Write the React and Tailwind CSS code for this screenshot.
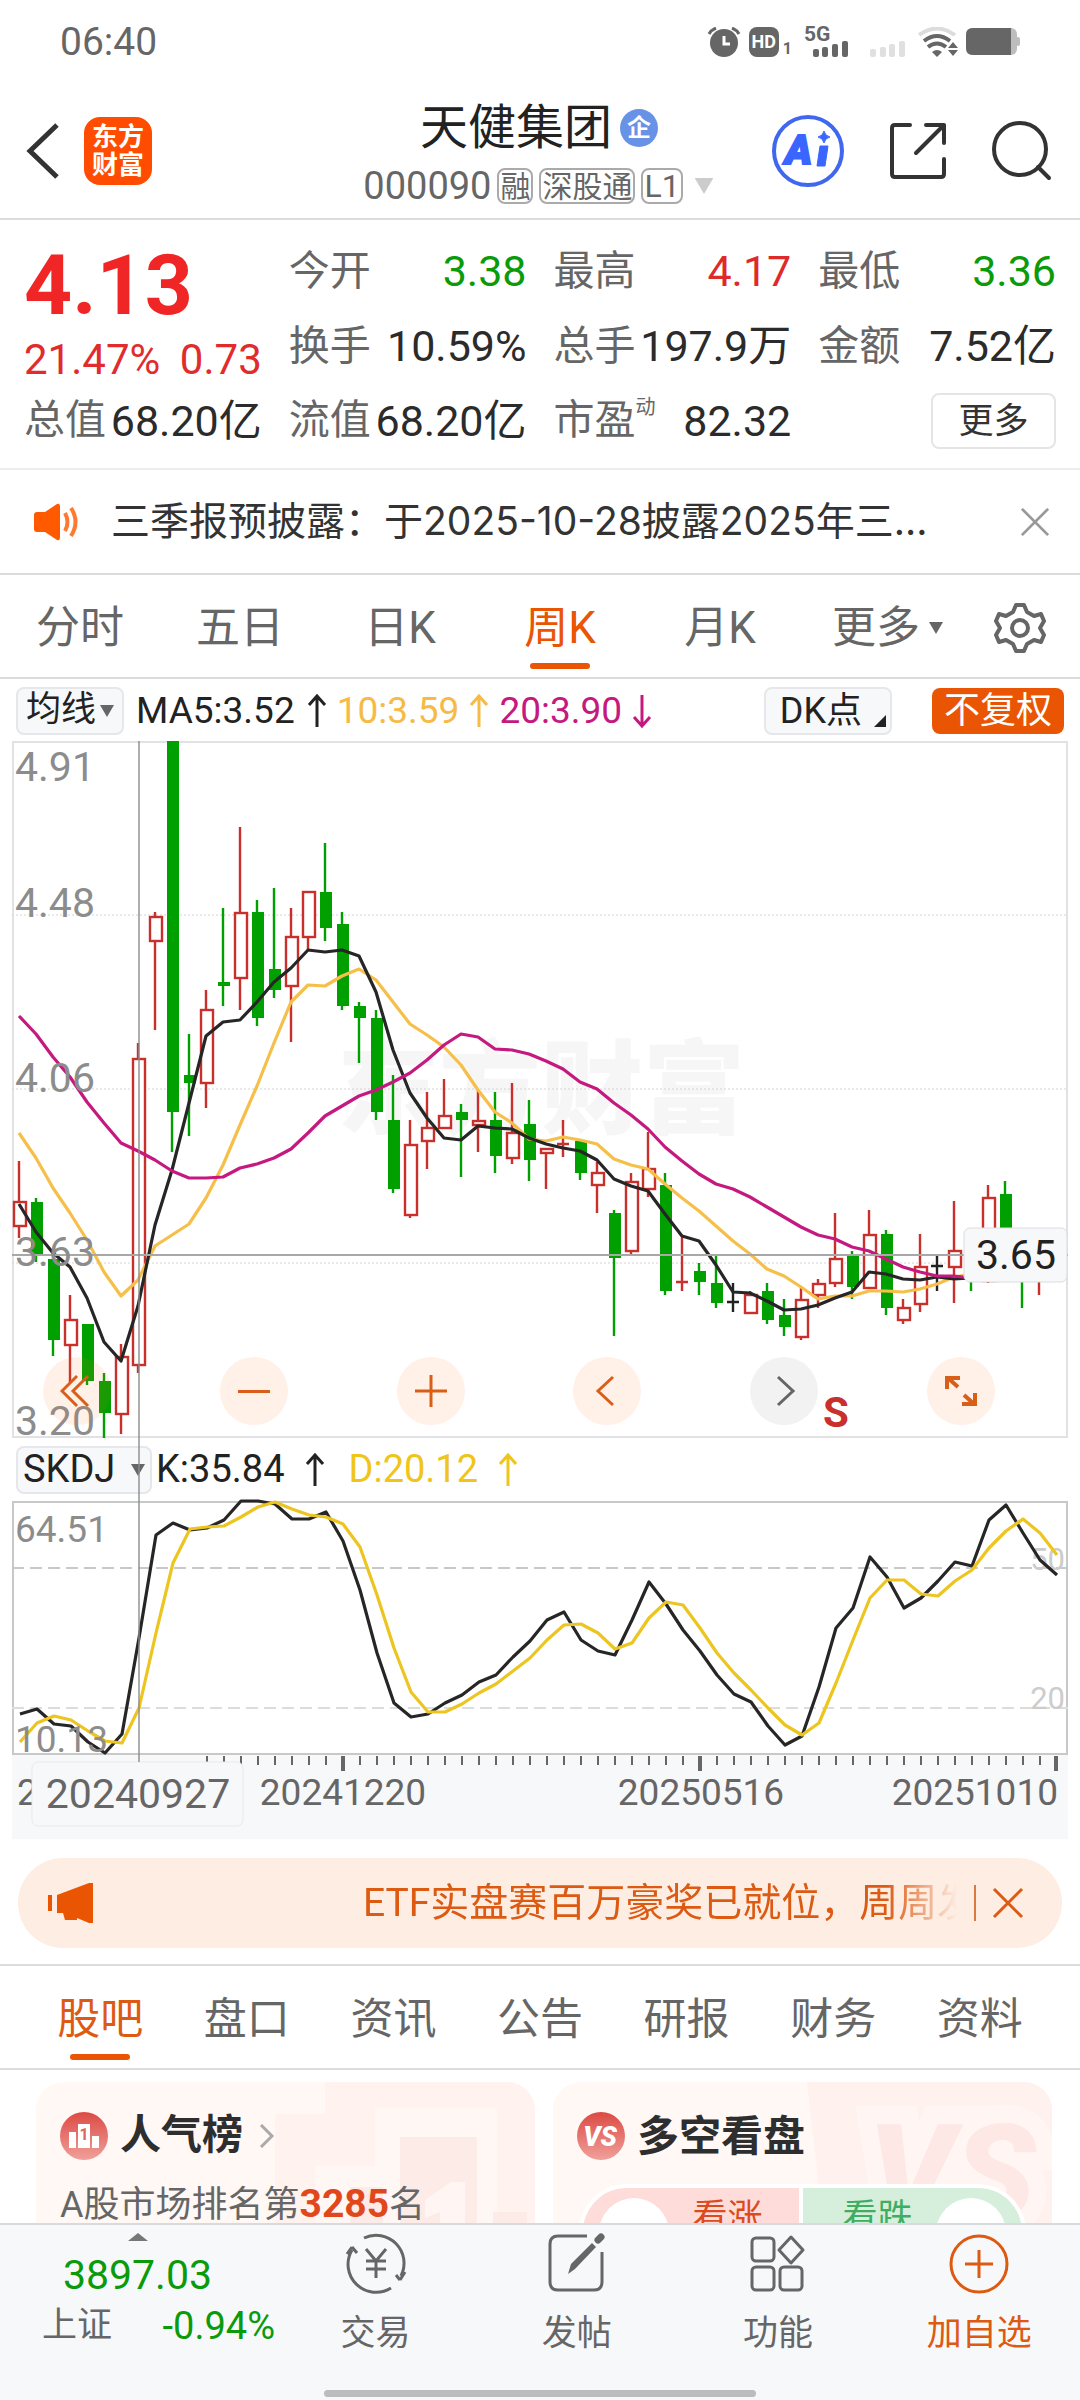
import React from "react";

// [kind, high, body top, body bottom, low] in chart units, r = up, g = down, k = flat
const candles = [
  ["r", 420, 460, 485, 497], ["g", 457, 461, 513, 521], ["g", 518, 518, 599, 615], ["r", 554, 578, 604, 642],
  ["g", 583, 583, 640, 644], ["g", 632, 640, 672, 697], ["r", 603, 615, 673, 693], ["r", 302, 317, 624, 632],
  ["r", 171, 175, 200, 289], ["g", 0, 0, 371, 411], ["g", 293, 334, 342, 395], ["r", 249, 268, 342, 367],
  ["g", 167, 241, 245, 265], ["r", 86, 171, 237, 269], ["g", 159, 171, 277, 285], ["g", 147, 228, 249, 257],
  ["r", 167, 195, 245, 301], ["r", 150, 150, 196, 208], ["g", 102, 151, 187, 200], ["g", 171, 183, 265, 269],
  ["g", 261, 265, 277, 322], ["g", 269, 277, 371, 379], ["g", 334, 379, 448, 452], ["r", 379, 403, 474, 477],
  ["r", 351, 386, 400, 428], ["r", 338, 374, 387, 387], ["g", 363, 371, 379, 436], ["r", 349, 379, 384, 411],
  ["g", 351, 379, 415, 432], ["r", 342, 391, 417, 423], ["g", 359, 383, 419, 440], ["r", 407, 407, 412, 448],
  ["r", 379, 403, 404, 416], ["g", 399, 400, 432, 439], ["r", 421, 431, 444, 472], ["g", 469, 472, 517, 595],
  ["r", 432, 440, 510, 513], ["r", 391, 427, 448, 456], ["g", 432, 444, 550, 554], ["r", 496, 541, 542, 550],
  ["g", 522, 530, 541, 554], ["g", 514, 542, 562, 567], ["k", 542, 561, 562, 571], ["r", 550, 553, 572, 572],
  ["g", 542, 550, 579, 583], ["g", 558, 574, 586, 595], ["r", 547, 558, 596, 599], ["r", 538, 542, 554, 567],
  ["r", 472, 517, 542, 546], ["g", 510, 514, 546, 558], ["r", 469, 493, 547, 547], ["g", 489, 493, 567, 574],
  ["r", 558, 566, 579, 583], ["r", 493, 525, 563, 571], ["k", 514, 525, 526, 550], ["r", 460, 509, 526, 562],
  ["g", 500, 505, 536, 550], ["r", 444, 456, 540, 542], ["g", 440, 453, 520, 530], ["g", 500, 505, 536, 567],
  ["r", 495, 500, 530, 554],
];

const ma5 = [463, 491, 512, 526, 557, 601, 620, 565, 484, 429, 362, 295, 281, 279, 261, 241, 227, 209, 211, 209, 215, 251, 309, 352, 377, 397, 399, 385, 387, 388, 397, 403, 407, 410, 419, 438, 445, 450, 473, 495, 500, 524, 551, 552, 560, 569, 568, 564, 557, 551, 531, 533, 538, 539, 536, 538, 537];
const ma10 = [392, 417, 447, 472, 499, 531, 555, 539, 505, 494, 483, 457, 424, 384, 345, 302, 261, 244, 245, 235, 228, 239, 261, 283, 294, 306, 324, 349, 371, 382, 398, 400, 396, 399, 403, 418, 424, 428, 443, 457, 470, 485, 500, 513, 528, 535, 546, 558, 555, 555, 550, 550, 551, 548, 543, 536, 533];
const ma20 = [275, 293, 316, 336, 361, 382, 402, 410, 419, 430, 437, 437, 436, 427, 423, 417, 408, 392, 375, 365, 355, 349, 341, 332, 319, 304, 293, 296, 308, 309, 313, 320, 328, 341, 348, 362, 374, 388, 406, 420, 433, 443, 448, 456, 466, 476, 486, 494, 498, 506, 510, 518, 526, 531, 535, 535, 537];

const lineK = [213, 208, 223, 225, 241, 252, 233, 137, 34, 22, 29, 27, 19, 0, 0, 3, 18, 18, 11, 40, 89, 152, 202, 216, 213, 202, 194, 181, 174, 156, 140, 119, 111, 139, 150, 154, 119, 81, 103, 129, 150, 174, 193, 201, 225, 244, 235, 186, 127, 107, 56, 76, 107, 97, 80, 61, 65, 19, 4, 32, 59, 74];
const lineD = [241, 222, 215, 219, 230, 240, 242, 207, 132, 62, 28, 26, 25, 16, 6, 1, 8, 14, 16, 23, 46, 94, 147, 191, 211, 211, 203, 192, 183, 170, 157, 139, 124, 123, 132, 148, 142, 117, 101, 104, 127, 152, 172, 189, 207, 224, 234, 222, 182, 139, 97, 79, 79, 93, 95, 80, 69, 47, 30, 18, 32, 54];

const colors = { r: "#c9302c", g: "#00a000", k: "#222222" };

const toPoints = (values, start) => values.map((y, i) => `${start + i * 17},${y}`).join(" ");

const quotes = [
  { label: "今开", value: "3.38", color: "text-[#0a9a0a]" },
  { label: "最高", value: "4.17", color: "text-[#dd2a2a]" },
  { label: "最低", value: "3.36", color: "text-[#0a9a0a]" },
  { label: "换手", value: "10.59%", color: "text-[#2b2b2b]" },
  { label: "总手", value: "197.9万", color: "text-[#2b2b2b]" },
  { label: "金额", value: "7.52亿", color: "text-[#2b2b2b]" },
];

const periods = ["分时", "五日", "日K", "周K", "月K"];
const sections = ["股吧", "盘口", "资讯", "公告", "研报", "财务", "资料"];

const Arrow = ({ down, className }) => (
  <svg viewBox="0 0 20 34" className={`w-5 h-[34px] ${className}`} fill="none" stroke="currentColor" strokeWidth="3">
    <path d={down ? "M10 1V32M2 23L10 32L18 23" : "M10 33V2M2 11L10 2L18 11"} />
  </svg>
);

const Caret = ({ className }) => (
  <svg viewBox="0 0 14 12" className={className} fill="currentColor">
    <path d="M0 0H14L7 12Z" />
  </svg>
);

const Close = ({ className }) => (
  <svg viewBox="0 0 32 32" className={className} fill="none" stroke="currentColor" strokeWidth="3">
    <path d="M2 2L30 30M30 2L2 30" />
  </svg>
);

const StatusBar = () => (
  <div className="flex h-[84px] shrink-0 items-center justify-between pl-[60px] pr-[60px] text-[#666]">
    <span className="text-[39px] leading-[48px]">06:40</span>
    <div className="flex items-center gap-2">
      <svg viewBox="0 0 34 30" className="h-[30px] w-[34px]">
        <circle cx="17" cy="16" r="14" fill="#666" />
        <path d="M2 7Q4 3 9 1M32 7Q30 3 25 1" stroke="#666" strokeWidth="3" fill="none" />
        <path d="M17 9V17H23" stroke="#fff" strokeWidth="3" fill="none" />
      </svg>
      <div className="flex items-end gap-1">
        <span className="flex h-[30px] w-[30px] items-center justify-center rounded-lg bg-[#666] text-lg font-bold text-white">HD</span>
        <span className="text-base leading-4 font-bold">1</span>
      </div>
      <svg viewBox="0 0 46 32" className="ml-1 h-8 w-[46px] overflow-visible" fill="#666">
        <text x="0" y="15" fontSize="21" fontWeight="700">5G</text>
        <rect x="9" y="23" width="6" height="8" rx="2" />
        <rect x="18" y="21" width="6" height="10" rx="2" />
        <rect x="28" y="18" width="6" height="13" rx="2" />
        <rect x="38" y="15" width="6" height="16" rx="2" />
      </svg>
      <svg viewBox="0 0 36 32" className="mr-1 ml-3 h-8 w-9" fill="#e0e0e0">
        <rect x="0" y="23" width="6" height="8" rx="2" />
        <rect x="10" y="21" width="6" height="10" rx="2" />
        <rect x="19" y="18" width="6" height="13" rx="2" />
        <rect x="29" y="15" width="6" height="16" rx="2" />
      </svg>
      <svg viewBox="0 0 40 30" className="h-[30px] w-10" fill="none" strokeWidth="4">
        <path d="M1 8Q19 -5 37 8" stroke="#dcdcdc" />
        <path d="M6 14Q19 4 32 14" stroke="#666" />
        <path d="M10 20Q19 13 28 20" stroke="#666" />
        <path d="M14 25Q19 21 24 25L19 30Z" fill="#666" />
        <path d="M30 21L35 15L40 21ZM30 23L35 29L40 23Z" fill="#666" />
      </svg>
      <svg viewBox="0 0 54 28" className="h-7 w-[54px]">
        <rect x="0" y="0" width="51" height="27" rx="6" fill="#bdbdbd" />
        <rect x="50" y="9" width="4" height="9" rx="2" fill="#bdbdbd" />
        <path d="M7 0H45V27H7Q0 27 0 20V7Q0 0 7 0Z" fill="#666" />
      </svg>
    </div>
  </div>
);

const Header = () => (
  <header className="flex h-[136px] shrink-0 items-center border-b-2 border-[#dcdcdc] pl-[26px] pr-7">
    <div className="flex flex-1 items-center gap-6">
      <button aria-label="返回">
        <svg viewBox="0 0 34 56" className="h-14 w-[34px]" fill="none" stroke="#333" strokeWidth="5">
          <path d="M31 2L4 28L31 54" />
        </svg>
      </button>
      <div className="flex h-[68px] w-[68px] flex-col items-center justify-center rounded-2xl bg-[#ff4c00] text-[26px] leading-7 font-bold text-white">
        <span>东方</span>
        <span>财富</span>
      </div>
    </div>
    <div className="flex flex-col items-center pt-[10px]">
      <h1 className="flex items-center gap-2 text-[48px] leading-[60px] text-[#222]">
        天健集团
        <span className="flex h-[38px] w-[38px] items-center justify-center rounded-full bg-[#6792e6] text-2xl font-bold text-white">企</span>
      </h1>
      <div className="flex h-14 items-center gap-[6px] text-[#666]">
        <span className="text-[38px]">000090</span>
        <span className="flex h-9 items-center rounded-lg border-2 border-[#aaa] px-px text-[30px]">融</span>
        <span className="flex h-9 items-center rounded-lg border-2 border-[#aaa] px-px text-[30px]">深股通</span>
        <span className="flex h-9 items-center rounded-lg border-2 border-[#aaa] px-px text-[32px]">L1</span>
        <Caret className="ml-1 h-4 w-[22px] text-[#ccc]" />
      </div>
    </div>
    <div className="flex flex-1 items-center justify-end gap-[45px]">
      <button aria-label="Ai">
        <svg viewBox="0 0 72 72" className="h-[72px] w-[72px]">
          <circle cx="36" cy="36" r="34" fill="none" stroke="#3f68ee" strokeWidth="4" />
          <text x="13" y="49" fontSize="41" fontWeight="900" fontStyle="italic" fill="#3a66ff" stroke="#3a66ff" strokeWidth="2">A</text>
          <path d="M48 31H56L53 51H45Z" fill="#3a66ff" stroke="#3a66ff" strokeWidth="1" strokeLinejoin="round" />
          <path d="M52 16Q53 21 58 22Q53 23 52 28Q51 23 46 22Q51 21 52 16Z" fill="#3a66ff" stroke="#3a66ff" />
        </svg>
      </button>
      <button aria-label="分享">
        <svg viewBox="0 0 58 58" className="h-[58px] w-[58px]" fill="none" stroke="#333" strokeWidth="4" strokeLinecap="round" strokeLinejoin="round">
          <path d="M21 3H6Q3 3 3 6V52Q3 55 6 55H52Q55 55 55 52V37M37 3H55V21M55 3L27 31" />
        </svg>
      </button>
      <button aria-label="搜索">
        <svg viewBox="0 0 60 60" className="h-[60px] w-[60px]" fill="none" stroke="#333" strokeWidth="4" strokeLinecap="round">
          <circle cx="28" cy="28" r="26" />
          <path d="M46 46L57 57" />
        </svg>
      </button>
    </div>
  </header>
);

const Pair = ({ label, value, color }) => (
  <div className="flex items-center justify-between whitespace-nowrap">
    <span className="text-[41px] text-[#666]">{label}</span>
    <span className={`text-[43px] ${color}`}>{value}</span>
  </div>
);

const Quote = () => (
  <section className="shrink-0 border-b-2 border-[#ececec] px-6 pt-[14px] pb-[10px]">
    <div className="grid grid-cols-4 gap-x-[27px]">
      <div className="row-span-2 flex flex-col text-[#e02c2c]">
        <strong className="h-[84px] text-[84px] leading-[104px] text-[#f02525]">4.13</strong>
        <div className="flex h-[66px] items-center justify-between pt-4 text-[42px]">
          <span>21.47%</span>
          <span>0.73</span>
        </div>
      </div>
      {quotes.map((q) => (
        <div key={q.label} className="flex h-[75px] flex-col justify-center">
          <Pair {...q} />
        </div>
      ))}
    </div>
    <div className="grid h-[74px] grid-cols-4 items-center gap-x-[27px]">
      <Pair label="总值" value="68.20亿" color="text-[#2b2b2b]" />
      <Pair label="流值" value="68.20亿" color="text-[#2b2b2b]" />
      <Pair
        label={<>市盈<sup className="-top-5 text-xl">动</sup></>}
        value="82.32"
        color="text-[#2b2b2b]"
      />
      <button className="h-14 w-[125px] justify-self-end rounded-lg border-2 border-[#e5e5e5] text-[35px] leading-none text-[#333]">更多</button>
    </div>
  </section>
);

const Notice = () => (
  <div className="flex h-[105px] shrink-0 items-center border-b-2 border-[#dcdcdc] pl-[33px] pr-[30px]">
    <svg viewBox="0 0 46 38" className="h-[38px] w-[46px]">
      <path d="M4 9H12L24 1Q27 0 27 4V34Q27 38 24 37L12 29H4Q1 29 1 26V12Q1 9 4 9Z" fill="#ff5a00" />
      <path d="M32 10Q37 19 32 28M38 5Q47 19 38 33" fill="none" stroke="#ff7a30" strokeWidth="4" />
    </svg>
    <p className="ml-8 flex-1 font-[Inter,'Noto_Sans_CJK_SC',sans-serif] text-[39px] whitespace-nowrap text-[#333]">三季报预披露：于2025-10-28披露2025年三...</p>
    <button aria-label="关闭">
      <Close className="h-[30px] w-[30px] text-[#999]" />
    </button>
  </div>
);

const Periods = () => (
  <nav className="flex h-[104px] shrink-0 border-b-2 border-[#dcdcdc] pt-1 text-[44px] text-[#666]">
    {periods.map((p) => (
      <button key={p} className={`relative flex-4 ${p === "周K" ? "text-[#ea5504]" : ""}`}>
        {p}
        {p === "周K" && <span className="absolute bottom-2 left-1/2 h-[6px] w-[60px] -translate-x-1/2 rounded-full bg-[#ea5504]" />}
      </button>
    ))}
    <button className="flex flex-4 items-center justify-center">
      <span className="ml-4">更多</span>
      <Caret className="ml-2 h-3 w-4" />
    </button>
    <button aria-label="设置" className="flex flex-3 items-center justify-center">
      <svg viewBox="0 0 52 52" className="h-[52px] w-[52px]" fill="none" stroke="#666" strokeWidth="4" strokeLinejoin="round">
        <path d="M22 3H30L33 10L40 14L47 12L50 19L46 26L50 33L47 40L40 38L33 42L30 49H22L19 42L12 38L5 40L2 33L6 26L2 19L5 12L12 14L19 10Z" />
        <circle cx="26" cy="26" r="8" />
      </svg>
    </button>
  </nav>
);

const chip = "flex items-center rounded-lg border-2 border-[#e6e7ea] bg-[#f7f8fa] text-[#222] whitespace-nowrap";
const round = "flex h-[68px] w-[68px] items-center justify-center rounded-full";

const PriceChart = () => (
  <div className="relative">
    <svg viewBox="0 0 1056 696" className="block w-full overflow-visible">
      <text x="529" y="385" textAnchor="middle" fontSize="102" fontWeight="900" fill="#f6f6f7">东方财富</text>
      <rect x="1" y="1" width="1054" height="695" fill="none" stroke="#e2e2e4" strokeWidth="2" />
      {[174, 348, 522].map((y) => (
        <path key={y} d={`M0 ${y}H1056`} stroke="#d4d4d4" strokeDasharray="2 2" />
      ))}
      {candles.map(([kind, high, top, bottom, low], i) => {
        const x = 7 + i * 17;
        const c = colors[kind];
        const flat = bottom - top <= 1;
        return (
          <g key={i} stroke={c} strokeWidth="2.4">
            <path d={flat ? `M${x} ${high}V${low}M${x - 6} ${top}H${x + 6}` : `M${x} ${high}V${top}M${x} ${bottom}V${low}`} />
            {!flat && kind === "g" && <rect x={x - 5} y={top} width="12" height={bottom - top} fill={c} stroke="none" />}
            {!flat && kind === "r" && <rect x={x - 5} y={top + 1} width="12" height={bottom - top - 1} fill="#fff" />}
          </g>
        );
      })}
      <g fill="none" strokeWidth="3.2" strokeLinejoin="round">
        <polyline points={toPoints(ma10, 7)} stroke="#f5bf4a" />
        <polyline points={toPoints(ma5, 7)} stroke="#262626" />
        <polyline points={toPoints(ma20, 7)} stroke="#c5197f" />
      </g>
      <path d="M0 514H1056" stroke="#a8a8a8" strokeWidth="2" />
      <g fontSize="41" fill="#8c8c8c">
        <text x="3" y="40">4.91</text>
        <text x="3" y="176">4.48</text>
        <text x="3" y="351">4.06</text>
        <text x="3" y="525">3.63</text>
        <text x="3" y="694">3.20</text>
      </g>
      <text x="811" y="686" fontSize="42" fontWeight="700" fill="#c9302c">S</text>
      <rect x="952" y="487" width="103" height="54" rx="6" fill="#f7f8fa" stroke="#dadce0" />
      <text x="964" y="528" fontSize="41" fill="#222">3.65</text>
    </svg>
    <div className="absolute right-[73px] bottom-3 left-[31px] flex justify-between text-[#d95f18]">
      <button aria-label="最早" className={`${round} bg-[#ff6a1a]/10`}>
        <svg viewBox="0 0 30 34" className="mr-1 h-[34px] w-[30px]" fill="none" stroke="currentColor" strokeWidth="3">
          <path d="M17 2L2 17L17 32M28 2L13 17L28 32" />
        </svg>
      </button>
      <button aria-label="缩小" className={`${round} bg-[#ff6a1a]/10`}>
        <span className="h-[3px] w-8 bg-current" />
      </button>
      <button aria-label="放大" className={`${round} bg-[#ff6a1a]/10`}>
        <svg viewBox="0 0 34 34" className="h-[34px] w-[34px]" stroke="currentColor" strokeWidth="3">
          <path d="M17 1V33M1 17H33" />
        </svg>
      </button>
      <button aria-label="向左" className={`${round} bg-[#ff6a1a]/10`}>
        <svg viewBox="0 0 20 32" className="mr-1 h-8 w-5" fill="none" stroke="currentColor" strokeWidth="3">
          <path d="M18 2L3 16L18 30" />
        </svg>
      </button>
      <button aria-label="向右" className={`${round} bg-[#f2f2f2] text-[#666]`}>
        <svg viewBox="0 0 20 32" className="ml-1 h-8 w-5" fill="none" stroke="currentColor" strokeWidth="3">
          <path d="M2 2L17 16L2 30" />
        </svg>
      </button>
      <button aria-label="全屏" className={`${round} bg-[#ff6a1a]/10`}>
        <svg viewBox="0 0 34 34" className="h-[34px] w-[34px]" fill="none" stroke="currentColor" strokeWidth="4">
          <path d="M3 15V4H16M4 4L14 13M31 19V30H18M30 30L20 21" />
        </svg>
      </button>
    </div>
  </div>
);

const SkdjChart = () => (
  <svg viewBox="0 0 1056 254" className="block w-full overflow-visible">
    <rect x="1" y="1" width="1054" height="252" fill="none" stroke="#c8c8c8" strokeWidth="2" />
    <path d="M0 67H1056" stroke="#c8c8c8" strokeWidth="2" strokeDasharray="12 6" />
    <path d="M0 207H1056" stroke="#dcdcdc" strokeWidth="2" strokeDasharray="12 6" />
    <g fontSize="31" fill="#ccc">
      <text x="1053" y="69" textAnchor="end">50</text>
      <text x="1053" y="208" textAnchor="end">20</text>
    </g>
    <g fill="none" strokeWidth="3.2" strokeLinejoin="round">
      <polyline points={toPoints(lineK, 8)} stroke="#262626" />
      <polyline points={toPoints(lineD, 8)} stroke="#edc520" />
    </g>
    <g fontSize="37" fill="#8c8c8c">
      <text x="3" y="41">64.51</text>
      <text x="3" y="251">10.13</text>
    </g>
  </svg>
);

const TimeAxis = () => (
  <svg viewBox="0 0 1056 84" className="block w-full bg-[#f7f8fa]">
    {Array.from({ length: 51 }, (_, k) => k + 11).map((i) => {
      const major = i === 19 || i === 40 || i === 61;
      return <path key={i} d={`M${Math.min(8 + i * 17, 1044)} 1V${major ? 16 : 10}`} stroke="#666" strokeWidth={major ? 4 : 2} />;
    })}
    <g fontSize="37" fill="#666">
      <text x="5" y="50">2</text>
      <text x="331" y="50" textAnchor="middle">20241220</text>
      <text x="689" y="50" textAnchor="middle">20250516</text>
      <text x="1046" y="50" textAnchor="end">20251010</text>
    </g>
    <rect x="20" y="7" width="211" height="64" rx="6" fill="#f7f8fa" stroke="#e8e9ec" />
    <text x="126" y="53" textAnchor="middle" fontSize="41" fill="#666">20240927</text>
  </svg>
);

const Charts = () => (
  <section className="shrink-0">
    <div className="flex h-[62px] items-center px-4 pt-px text-[37px]">
      <button className={`${chip} h-12 gap-1 px-2 text-[35px]`}>
        均线
        <Caret className="h-3 w-[14px] text-[#666]" />
      </button>
      <span className="ml-3 text-[#222]">MA5:3.52</span>
      <Arrow className="ml-3 text-[#222]" />
      <span className="ml-[10px] text-[#f5bb46]">10:3.59</span>
      <Arrow className="ml-[10px] text-[#f5bb46]" />
      <span className="ml-[10px] text-[#c5197f]">20:3.90</span>
      <Arrow down className="ml-[10px] text-[#c5197f]" />
      <button className={`${chip} ml-auto h-12 gap-3 pl-[14px] pr-1 text-[36px]`}>
        DK点
        <svg viewBox="0 0 12 12" className="mt-5 h-3 w-3" fill="#222"><path d="M12 0V12H0Z" /></svg>
      </button>
      <button className="ml-10 h-[46px] rounded-lg bg-[#ea5504] px-3 text-[36px] leading-none whitespace-nowrap text-white">不复权</button>
    </div>
    <div className="relative mx-3">
      <PriceChart />
      <div className="flex h-16 items-center pt-px pl-1 text-[38px]">
        <button className={`${chip} h-12 w-[136px] justify-between px-[5px]`}>
          SKDJ
          <Caret className="h-3 w-[14px] text-[#666]" />
        </button>
        <span className="ml-1 text-[#222]">K:35.84</span>
        <Arrow className="ml-5 text-[#222]" />
        <span className="ml-6 text-[#f0c419]">D:20.12</span>
        <Arrow className="ml-5 text-[#f0c419]" />
      </div>
      <SkdjChart />
      <TimeAxis />
      {/* crosshair runs through both panels down to the date label */}
      <span className="absolute top-0 bottom-[77px] left-[11.9%] w-[2px] bg-[#8c8c8c]/70" />
    </div>
  </section>
);

const Banner = () => (
  <div className="mx-[18px] mt-[19px] mb-4 flex h-[90px] shrink-0 items-center rounded-full bg-[#fdede3] pl-7 pr-[38px] text-[#dd5a12]">
    <svg viewBox="0 0 50 40" className="h-10 w-[50px]" fill="#ea5504">
      <path d="M2 12H6V28H2ZM11 12L43 0H47V40H43L31 35V37H19L17 30H11Z" />
    </svg>
    <div className="ml-auto w-[594px] overflow-hidden text-[39px] whitespace-nowrap [mask-image:linear-gradient(to_right,black_88%,transparent)]">
      ETF实盘赛百万豪奖已就位，周周发
    </div>
    <span className="ml-[17px] h-9 w-[2px] bg-[#dd7a42]" />
    <button aria-label="关闭" className="ml-4">
      <Close className="h-8 w-8" />
    </button>
  </div>
);

const Sections = () => (
  <nav className="flex h-[106px] shrink-0 border-y-2 border-[#dcdcdc] px-[27px] pt-1 text-[43px] text-[#666]">
    {sections.map((s) => (
      <button key={s} className={`relative flex-1 ${s === "股吧" ? "text-[#dd5a12]" : ""}`}>
        {s}
        {s === "股吧" && <span className="absolute bottom-2 left-1/2 h-[6px] w-[60px] -translate-x-1/2 rounded-full bg-[#ea5504]" />}
      </button>
    ))}
  </nav>
);

const Cards = () => (
  <div className="grid grid-cols-2 gap-[18px] px-7 pt-3 pl-9">
    <div className="relative h-[220px] overflow-hidden rounded-[28px] bg-[#fff8f5] px-6 pt-6">
      <svg viewBox="0 0 260 220" className="absolute top-0 right-0 h-[220px] w-[260px]">
        <path d="M50 0H260V220H0V32H50Z" fill="#fff2ef" />
        <path d="M100 26H222V220H40V84H100Z" fill="#fff7f4" />
        <path d="M125 55H202V220H125Z" fill="#fdebe8" />
        <path d="M75 105H108V220H75ZM218 130H252V220H218Z" fill="#fdebe8" />
        <path d="M150 118L176 100H190V220H165V130L150 136Z" fill="#fff5f2" />
      </svg>
      <div className="relative flex h-[60px] items-center text-[41px] font-bold text-[#2e2e2e]">
        <svg viewBox="0 0 48 48" className="mr-3 h-12 w-12">
          <defs>
            <linearGradient id="badge" x1="0" y1="0" x2="0" y2="1">
              <stop offset="0" stopColor="#dc4a44" />
              <stop offset="1" stopColor="#f0a09b" />
            </linearGradient>
          </defs>
          <circle cx="24" cy="24" r="24" fill="url(#badge)" />
          <path d="M9 20H16V36H9ZM32 24H39V36H32ZM18 12H30V36H18Z" fill="#fff" />
          <text x="24" y="28" textAnchor="middle" fontSize="16" fontWeight="700" fill="#dd6660">1</text>
        </svg>
        人气榜
        <svg viewBox="0 0 16 24" className="ml-4 h-6 w-4" fill="none" stroke="#aaa" strokeWidth="3"><path d="M2 1L13 12L2 23" /></svg>
      </div>
      <p className="relative mt-2 text-[36px] leading-[60px] whitespace-nowrap text-[#666]">
        A股市场排名第<b className="text-[39px] text-[#e0481c]">3285</b>名
      </p>
    </div>
    <div className="relative h-[220px] overflow-hidden rounded-[28px] bg-[#fff8f5] px-6 pt-6">
      <svg viewBox="0 0 250 220" className="absolute top-0 right-0 h-[220px] w-[250px]">
        <path d="M5 0H250V220H30Z" fill="#fff1ee" />
        <text x="66" y="137" fontSize="134" fontWeight="900" fontStyle="italic" fill="#fde8e6" stroke="#fff6f3" strokeWidth="36" paintOrder="stroke">VS</text>
      </svg>
      <div className="relative flex h-[60px] items-center text-[42px] font-bold text-[#2e2e2e]">
        <svg viewBox="0 0 48 48" className="mr-3 h-12 w-12">
          <circle cx="24" cy="24" r="24" fill="url(#badge)" />
          <text x="23" y="34" textAnchor="middle" fontSize="27" fontWeight="900" fontStyle="italic" fill="#fff">VS</text>
        </svg>
        多空看盘
      </div>
      <div className="relative mx-[2px] mt-[18px] flex h-[90px] rounded-t-[48px] border-4 border-b-0 border-white text-[35px] leading-[60px]">
        <div className="flex flex-1 items-start justify-between rounded-tl-[44px] border-r-2 border-white bg-[#fddcd9] pl-4 pr-9 text-[#dc4a20]">
          <span className="mt-[10px] h-[70px] w-[70px] rounded-full bg-white" />
          看涨
        </div>
        <div className="flex flex-1 items-start justify-between rounded-tr-[44px] border-l-2 border-white bg-[#d6eedc] pl-10 pr-4 text-[#3fae63]">
          看跌
          <span className="mt-[10px] h-[70px] w-[70px] rounded-full bg-white" />
        </div>
      </div>
    </div>
  </div>
);

const actions = [
  {
    label: "交易",
    icon: (
      <>
        <path d="M20 6A28 28 0 0 1 57 44M56 48L52 43M56 48L61 40" />
        <path d="M47 56A28 28 0 0 1 8 18M8 15L3 22M8 15L13 21" />
        <path d="M22 17L32 29L42 17M32 29V46M22 29H42M22 37H42" />
      </>
    ),
  },
  {
    label: "发帖",
    icon: (
      <>
        <path d="M42 4H13Q5 4 5 12V50Q5 58 13 58H49Q57 58 57 50V20" />
        <path d="M53 8L56 5" strokeWidth="7" strokeLinecap="round" />
        <path d="M23 42L26 32L47 11L51 15L30 37Z" fill="currentColor" stroke="none" />
      </>
    ),
  },
  {
    label: "功能",
    icon: (
      <>
        <rect x="6" y="6" width="22" height="23" rx="4" />
        <rect x="6" y="35" width="22" height="23" rx="4" />
        <rect x="34" y="35" width="22" height="23" rx="4" />
        <path d="M45 5L57 18L45 31L33 18Z" strokeLinejoin="round" />
      </>
    ),
  },
  {
    label: "加自选",
    icon: (
      <>
        <circle cx="32" cy="32" r="28" />
        <path d="M32 18V46M18 32H46" />
      </>
    ),
  },
];

const BottomBar = () => (
  <footer className="flex h-[177px] shrink-0 flex-col justify-between border-t-2 border-[#d8dade] bg-[#f7f8fa] pb-[3px]">
    <div className="flex">
      <a href="#index" className="flex w-[275px] flex-col items-center pt-2">
        <svg viewBox="0 0 20 8" className="h-2 w-5" fill="#777"><path d="M10 0L20 8H0Z" /></svg>
        <span className="mt-px text-[41px] leading-[66px] text-[#0a9a0a]">3897.03</span>
        <span className="flex w-full items-center justify-between pl-[42px] text-[35px] leading-9 text-[#666]">
          上证
          <span className="text-[38px] text-[#0a9a0a]">-0.94%</span>
        </span>
      </a>
      <div className="flex flex-1">
        {actions.map((a) => (
          <button key={a.label} className={`flex flex-1 flex-col items-center pt-[7px] ${a.label === "加自选" ? "text-[#dd5a12]" : "text-[#666]"}`}>
            <svg viewBox="0 0 64 64" className="h-16 w-16" fill="none" stroke="currentColor" strokeWidth="3">{a.icon}</svg>
            <span className="mt-[14px] text-[35px] leading-[48px]">{a.label}</span>
          </button>
        ))}
      </div>
    </div>
    <span className="mx-auto h-[7px] w-2/5 rounded-full bg-[#bcbcbe]" />
  </footer>
);

const App = () => {
  return (
    <div className="flex h-screen w-full flex-col overflow-hidden bg-white font-[Roboto,'Noto_Sans_CJK_SC',sans-serif]">
      <StatusBar />
      <Header />
      <Quote />
      <Notice />
      <Periods />
      <Charts />
      <Banner />
      <Sections />
      <main className="min-h-0 flex-1 overflow-hidden">
        <Cards />
      </main>
      <BottomBar />
    </div>
  );
};

export default App;
